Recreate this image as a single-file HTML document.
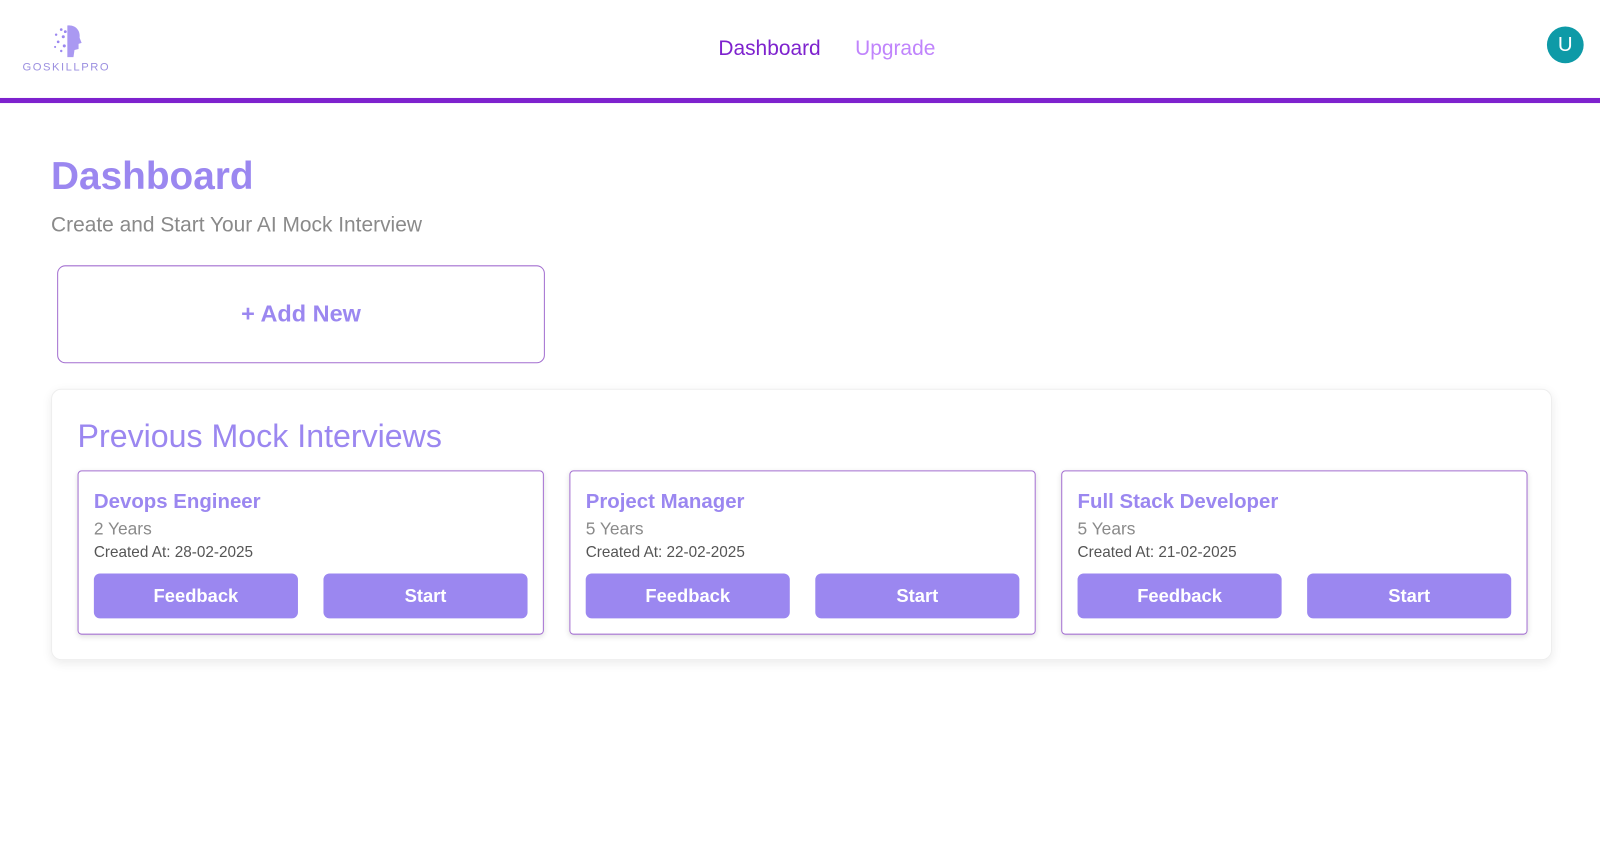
<!DOCTYPE html>
<html><head><style>
*{box-sizing:border-box;margin:0;padding:0}
body{width:1600px;height:858px;background:#fff;font-family:"Liberation Sans",sans-serif;position:relative;overflow:hidden}
#w{position:absolute;left:0;top:0;width:1568px;height:841px;transform:scale(1.0204);transform-origin:0 0}
.abs{position:absolute}
.bar{left:0;top:96px;width:1600px;height:5px;background:#7e22ce}
.nav{top:36px;font-size:20.5px}
.av{left:1516px;top:26px;width:36px;height:36px;border-radius:50%;background:#0e9aa7;color:#fff;font-size:20px;text-align:center;line-height:36px}
h1{position:absolute;left:50px;top:152px;font-size:38px;color:#9b87f0;font-weight:bold}
.sub{left:50px;top:209px;font-size:20.5px;color:#8a8a8a}
.add{left:56px;top:260px;width:478px;height:96px;border:1.5px solid #a36fd0;border-radius:8px;text-align:center;line-height:93px;font-size:23px;color:#9b87f0;font-weight:bold}
.box{left:50px;top:381px;width:1471px;height:266px;border:1px solid #eee;border-radius:10px;box-shadow:0 3px 10px rgba(0,0,0,.08)}
.pt{left:76px;top:409px;font-size:31.5px;color:#9b87f0}
.card{top:461px;width:457px;height:161px;border:1.5px solid #a36fd0;border-radius:4px;box-shadow:0 2px 5px rgba(0,0,0,.12)}
.card .t{position:absolute;left:15px;top:19px;font-size:20px;font-weight:bold;color:#9b87f0}
.card .y{position:absolute;left:15px;top:47px;font-size:17px;color:#8a8a8a}
.card .c{position:absolute;left:15px;top:71px;font-size:15px;color:#555}
.btn{position:absolute;top:100px;width:200px;height:44px;background:#9b87f0;border-radius:6px;color:#fff;font-size:18px;font-weight:bold;text-align:center;line-height:44px}
</style></head><body><div id="w">
<svg class="abs" style="left:46px;top:22px" width="40" height="38" viewBox="0 0 40 38">
<path d="M20 3 C28 2 33 8 32 15 L34 20 L31 21 L31 26 L27 27 L26 34 L20 34 Z" fill="#9b87f0" opacity=".85"/>
<g fill="#9b87f0"><circle cx="14" cy="7" r="1.3"/><circle cx="9" cy="12" r="1.2"/><circle cx="16" cy="14" r="1.5"/><circle cx="11" cy="19" r="1.3"/><circle cx="17" cy="23" r="1.5"/><circle cx="14" cy="28" r="1.2"/><circle cx="8" cy="24" r="1"/><circle cx="18" cy="9" r="1.4"/></g></svg>
<div class="abs" style="left:22px;top:60px;font-size:11px;letter-spacing:1.5px;color:#9b8fe0">GOSKILLPRO</div>
<div class="abs nav" style="left:704px;color:#7e22ce">Dashboard</div>
<div class="abs nav" style="left:838px;color:#c084fc">Upgrade</div>
<div class="abs av">U</div>
<div class="abs bar"></div>
<h1>Dashboard</h1>
<div class="abs sub">Create and Start Your AI Mock Interview</div>
<div class="abs add">+ Add New</div>
<div class="abs box"></div>
<div class="abs pt">Previous Mock Interviews</div>
<div class="abs card" style="left:76px"><div class="t">Devops Engineer</div><div class="y">2 Years</div><div class="c">Created At: 28-02-2025</div><div class="btn" style="left:15px">Feedback</div><div class="btn" style="left:240px">Start</div></div>
<div class="abs card" style="left:558px"><div class="t">Project Manager</div><div class="y">5 Years</div><div class="c">Created At: 22-02-2025</div><div class="btn" style="left:15px">Feedback</div><div class="btn" style="left:240px">Start</div></div>
<div class="abs card" style="left:1040px"><div class="t">Full Stack Developer</div><div class="y">5 Years</div><div class="c">Created At: 21-02-2025</div><div class="btn" style="left:15px">Feedback</div><div class="btn" style="left:240px">Start</div></div>
</div></body></html>
